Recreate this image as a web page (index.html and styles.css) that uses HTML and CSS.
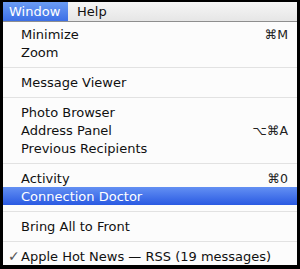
FILE: index.html
```html
<!DOCTYPE html>
<html>
<head>
<meta charset="utf-8">
<link rel="stylesheet" href="styles.css">
</head>
<body>
<div class="frame">
  <div class="menubar">
    <span class="title active">Window</span>
    <span class="title">Help</span>
  </div>
  <div class="menu">
    <div class="item"><span class="label">Minimize</span><span class="key">⌘M</span></div>
    <div class="item"><span class="label">Zoom</span></div>
    <div class="sep"></div>
    <div class="item"><span class="label">Message Viewer</span></div>
    <div class="sep"></div>
    <div class="item"><span class="label">Photo Browser</span></div>
    <div class="item"><span class="label">Address Panel</span><span class="key">⌥⌘A</span></div>
    <div class="item"><span class="label">Previous Recipients</span></div>
    <div class="sep"></div>
    <div class="item"><span class="label">Activity</span><span class="key">⌘0</span></div>
    <div class="item selected"><span class="label">Connection Doctor</span></div>
    <div class="sep"></div>
    <div class="item"><span class="label">Bring All to Front</span></div>
    <div class="sep"></div>
    <div class="item"><span class="check">✓</span><span class="label">Apple Hot News — RSS (19 messages)</span></div>
  </div>
</div>
</body>
</html>
```
FILE: styles.css
```css
html, body {
  margin: 0;
  padding: 0;
  background: #000;
}
body {
  width: 300px;
  height: 269px;
  overflow: hidden;
  font-family: "DejaVu Sans", "Liberation Sans", sans-serif;
  font-size: 13px;
  color: #111;
}
.frame {
  margin: 2px 3px 0 3px;
  width: 294px;
  height: 263px;
  background: #fcfcfc;
  display: flex;
  flex-direction: column;
}
.menubar {
  height: 19px;
  border-bottom: 1px solid #8e8e8e;
  background: linear-gradient(#f6f6f6, #e6e6e6);
  display: flex;
  align-items: stretch;
}
.title {
  display: flex;
  align-items: center;
  padding: 0 8px 0 9px;
  font-size: 13px;
  white-space: nowrap;
}
.title.active {
  background: linear-gradient(#6b9cf4, #3c6fe6);
  color: #fff;
  width: 51px;
  padding: 0 8px 0 6px;
}
.menu {
  padding-top: 3px;
  display: flex;
  flex-direction: column;
}
.item {
  height: 18px;
  display: flex;
  align-items: center;
  padding: 0 9px 0 18px;
  position: relative;
  font-size: 13px;
  white-space: nowrap;
}
.label {
  flex: 1;
}
.key {
  font-size: 12.5px;
  color: #222;
}
.check {
  position: absolute;
  left: 5px;
  font-size: 14px;
  color: #555;
}
.item.selected {
  background: linear-gradient(#6390f3, #2a5ae2);
  color: #fff;
}
.sep {
  height: 12px;
  display: flex;
  align-items: center;
}
.sep::before {
  content: "";
  display: block;
  width: 100%;
  height: 1px;
  background: #e2e2e2;
}
```
